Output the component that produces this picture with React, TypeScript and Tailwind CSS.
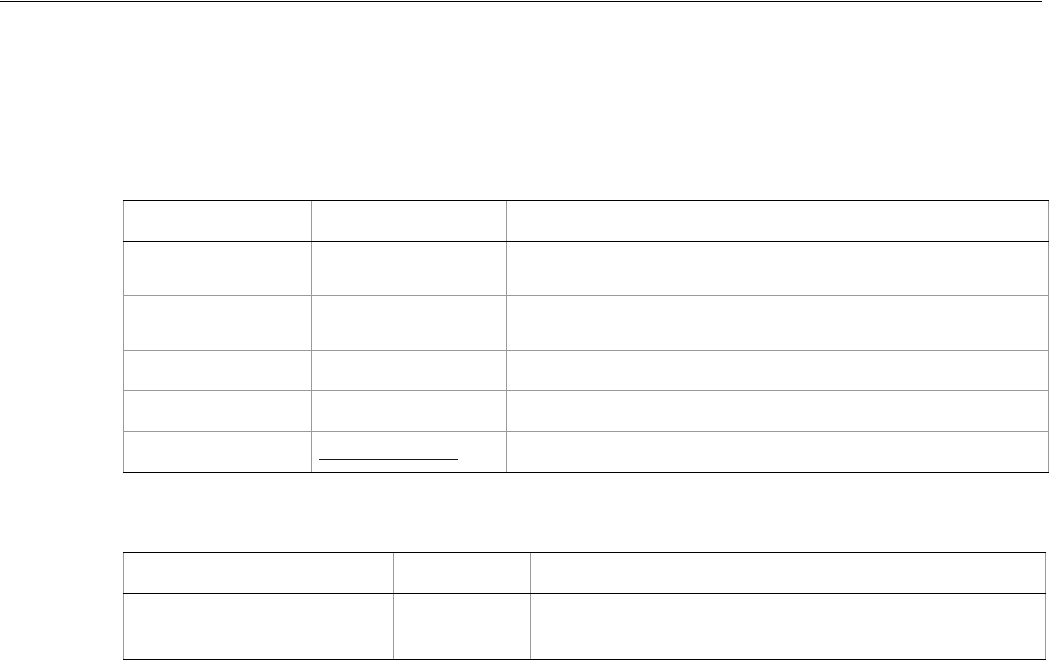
const Row = ({ h, cols, last, head }: { h: string; cols: string[]; last?: boolean; head?: boolean }) => (
  <div className={`flex ${head ? "border-b border-black" : last ? "border-b border-black" : "border-b border-[#9a9a9a]"}`}>
    {cols.map((w, i) => (
      <div key={i} className={`${w} ${h} border-l border-[#9a9a9a] ${i === cols.length - 1 ? "border-r" : ""}`} />
    ))}
  </div>
);

export default function App() {
  const c1 = ["w-[188px]", "w-[195px]", "w-[543px]"];
  const c2 = ["w-[270px]", "w-[137px]", "w-[516px]"];
  return (
    <div className="min-h-[660px] bg-white font-['Liberation_Sans',sans-serif]">
      <div className="h-[2px] pt-px">
        <div className="h-px w-[1042px] bg-black" />
      </div>
      <div className="ml-[123px] mt-[198px] w-[926px] border-t border-black">
        <Row head h="h-[40px]" cols={c1} />
        <Row h="h-[53px]" cols={c1} />
        <Row h="h-[54px]" cols={c1} />
        <Row h="h-[39px]" cols={c1} />
        <Row h="h-[40px]" cols={c1} />
        <div className="flex border-b border-black">
          <div className="h-[40px] w-[188px] border-l border-[#9a9a9a]" />
          <div className="h-[40px] w-[195px] border-l border-[#9a9a9a] pl-[7px] pt-[27px]">
            <a className="block h-px w-[139px] bg-[#0000cc]" />
          </div>
          <div className="h-[40px] w-[543px] border-x border-[#9a9a9a]" />
        </div>
      </div>
      <div className="ml-[123px] mt-[79px] w-[923px] border-t border-black">
        <Row head h="h-[40px]" cols={c2} />
        <Row last h="h-[65px]" cols={c2} />
      </div>
    </div>
  );
}
